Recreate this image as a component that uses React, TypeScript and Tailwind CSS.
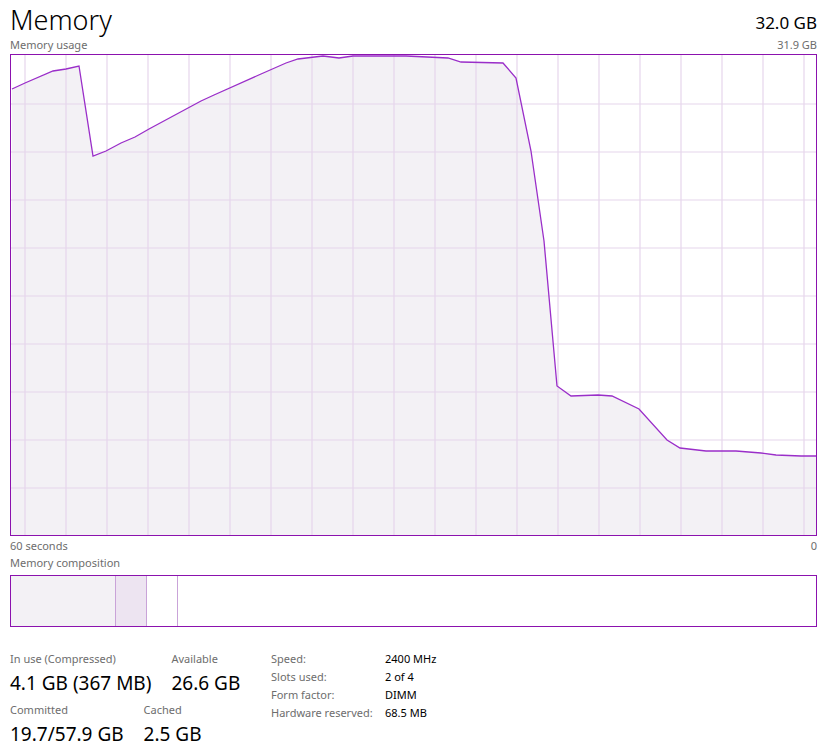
const W = 807;
const H = 482;

// points in page coords (chart box starts at x=10, y=54)
const raw: [number, number][] = [
  [11, 88], [24, 82], [52, 70], [65, 68], [78, 65], [92, 155], [105, 150], [120, 142],
  [134, 136], [148, 128], [200, 100], [213, 94], [260, 73], [285, 62], [297, 58],
  [322, 55], [338, 57], [352, 55], [390, 55], [405, 55], [447, 57], [460, 61], [502, 62],
  [515, 77], [530, 150], [543, 240], [556, 385], [570, 395], [597, 394], [611, 395],
  [638, 408], [666, 439], [679, 447], [705, 450], [735, 450], [760, 452], [775, 454],
  [800, 455], [817, 455],
];

const pts = raw.map(([x, y]) => [x - 10, y - 54] as [number, number]);
const line = pts.map((p) => p.join(",")).join(" ");
const area = `0,${H} ${line} ${W},${H}`;

const vLines = Array.from({ length: 20 }, (_, i) => 14 + i * 41);
const hLines = Array.from({ length: 9 }, (_, i) => 49 + i * 48);

function UsageChart() {
  return (
    <div className="h-[482px] w-full border border-[#8b12ae] bg-white">
      <svg width="100%" height="100%" viewBox={`0 0 ${W - 2} ${H - 2}`} preserveAspectRatio="none">
        <polygon points={area} fill="#f3f1f5" />
        {vLines.map((x) => (
          <line key={x} x1={x} y1={0} x2={x} y2={H} stroke="#e6d5ec" strokeWidth={1.2} />
        ))}
        {hLines.map((y) => (
          <line key={y} x1={0} y1={y} x2={W} y2={y} stroke="#e6d5ec" strokeWidth={1.2} />
        ))}
        <polyline points={line} fill="none" stroke="#9a2ec9" strokeWidth={1.3} />
      </svg>
    </div>
  );
}

function Stat({ label, value }: { label: string; value: string }) {
  return (
    <div className="flex flex-col">
      <span className="text-[11px] leading-[14px] text-[#6d6d6d]">{label}</span>
      <span className="mt-[6px] text-[19px] leading-[22px] text-black">{value}</span>
    </div>
  );
}

const specs = [
  ["Speed:", "2400 MHz"],
  ["Slots used:", "2 of 4"],
  ["Form factor:", "DIMM"],
  ["Hardware reserved:", "68.5 MB"],
];

export default function App() {
  return (
    <div
      className="h-[755px] w-[826px] overflow-hidden bg-white pl-[10px] pr-[9px] text-black"
      style={{ fontFamily: '"Noto Sans", "Open Sans", sans-serif' }}
    >
      <div className="flex h-[38px] items-end justify-between">
        <span className="text-[27px] font-light leading-[36px]">Memory</span>
        <span className="mb-[4px] text-[17px] leading-[22px]">32.0 GB</span>
      </div>
      <div className="flex h-[16px] items-start justify-between text-[11px] leading-[14px] text-[#6d6d6d]">
        <span>Memory usage</span>
        <span>31.9 GB</span>
      </div>
      <UsageChart />
      <div className="flex h-[20px] items-center justify-between text-[11px] leading-[14px] text-[#6d6d6d]">
        <span>60 seconds</span>
        <span>0</span>
      </div>
      <div className="h-[19px] text-[11px] leading-[14px] text-[#6d6d6d]">Memory composition</div>
      <div className="flex h-[52px] border border-[#8b12ae] bg-white">
        <div className="w-[105px] border-r border-[#c9a3d8] bg-[#f3f1f5]" />
        <div className="w-[31px] border-r border-[#c9a3d8] bg-[#ede4f1]" />
        <div className="w-[31px] border-r border-[#c9a3d8]" />
        <div className="flex-1" />
      </div>

      <div className="mt-[25px] flex items-start">
        <div className="flex w-[261px] flex-col gap-[9px]">
          <div className="flex gap-[20px]">
            <Stat label="In use (Compressed)" value="4.1 GB (367 MB)" />
            <Stat label="Available" value="26.6 GB" />
          </div>
          <div className="flex gap-[20px]">
            <Stat label="Committed" value="19.7/57.9 GB" />
            <Stat label="Cached" value="2.5 GB" />
          </div>
        </div>
        <div className="-mt-[2px] grid grid-cols-[114px_auto] text-[11px] leading-[18px]">
          {specs.map(([k, v]) => (
            <div key={k} className="contents">
              <span className="text-[#6d6d6d]">{k}</span>
              <span>{v}</span>
            </div>
          ))}
        </div>
      </div>
    </div>
  );
}
